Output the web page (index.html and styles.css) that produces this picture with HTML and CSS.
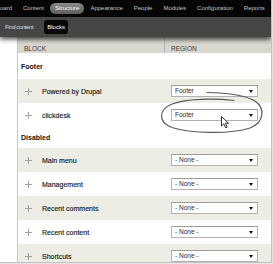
FILE: index.html
```html
<!DOCTYPE html>
<html lang="en">
<head>
    <meta charset="UTF-8">
    <meta name="viewport" content="width=device-width, initial-scale=1.0">
    <title>Blocks</title>
    <link rel="stylesheet" href="styles.css">
</head>
<body>
<div class="screen">
    <header class="toolbar">
        <nav class="toolbar-menu">
            <a class="first">oard</a>
            <a>Content</a>
            <a class="active">Structure</a>
            <a>Appearance</a>
            <a>People</a>
            <a>Modules</a>
            <a>Configuration</a>
            <a>Reports</a>
        </nav>
        <nav class="toolbar-shortcuts">
            <a class="find">Find content</a>
            <a class="active">Blocks</a>
        </nav>
    </header>

    <div class="content">
        <div class="block-table">
            <div class="row header">
                <div class="cell">Block</div>
                <div class="cell">Region</div>
            </div>

            <div class="row region footer-region"><div class="cell">Footer</div></div>
            <div class="row odd">
                <div class="cell"><span class="handle"></span>Powered by Drupal</div>
                <div class="cell"><span class="select">Footer</span></div>
            </div>
            <div class="row">
                <div class="cell"><span class="handle"></span>clickdesk</div>
                <div class="cell"><span class="select">Footer</span></div>
            </div>

            <div class="row region disabled-region"><div class="cell">Disabled</div></div>
            <div class="row odd">
                <div class="cell"><span class="handle"></span>Main menu</div>
                <div class="cell"><span class="select">- None -</span></div>
            </div>
            <div class="row">
                <div class="cell"><span class="handle"></span>Management</div>
                <div class="cell"><span class="select">- None -</span></div>
            </div>
            <div class="row odd">
                <div class="cell"><span class="handle"></span>Recent comments</div>
                <div class="cell"><span class="select">- None -</span></div>
            </div>
            <div class="row">
                <div class="cell"><span class="handle"></span>Recent content</div>
                <div class="cell"><span class="select">- None -</span></div>
            </div>
            <div class="row odd">
                <div class="cell"><span class="handle"></span>Shortcuts</div>
                <div class="cell"><span class="select">- None -</span></div>
            </div>
        </div>
    </div>

    <!-- hand drawn circle round the clickdesk region -->
    <svg class="annotation" width="273" height="264" viewBox="0 0 273 264">
        <path d="M207 92.5 C228 93 246 95.5 255 101 C265 108 265 122 250 128 C230 134.5 190 133.5 172 127.5 C158 122 158 110 172 104 C186 99 212 98 234 100.5"
              fill="none" stroke="#5a5a5a" stroke-width="1.2" stroke-linecap="round"/>
    </svg>
    <svg class="cursor" width="9" height="13" viewBox="0 0 9 13">
        <path d="M0.5 0.5 L0.5 10 L2.8 7.8 L4.6 11.8 L6.2 11.1 L4.4 7.2 L7.6 7.2 Z"
              fill="#fff" stroke="#000" stroke-width="0.8" stroke-linejoin="round"/>
    </svg>
</div>
</body>
</html>
```

FILE: styles.css
```css
body {
    margin: 0;
    width: 273px;
    height: 264px;
    overflow: hidden;
    background: #e6e6e6;
    font-family: 'Liberation Sans', Arial, sans-serif;
}

.screen {
    position: relative;
    width: 271px;
    height: 262px;
    overflow: hidden;
    background: #fff;
    border-right: 1px solid #c2c2c2;
    border-bottom: 1px solid #c2c2c2;
}

/* toolbar */

.toolbar {
    position: relative;
    z-index: 1;
    box-shadow: 0 2px 5px rgba(0, 0, 0, 0.75);
}

.toolbar a {
    font-size: 6px;
    line-height: 7px;
    white-space: nowrap;
}

.toolbar-menu {
    display: flex;
    align-items: center;
    gap: 1px;
    height: 17px;
    background: #050505;
}

.toolbar-menu a {
    padding: 2px 5px;
    color: #c4c4c4;
}

.toolbar-menu a.first {
    margin-left: -5px;
}

.toolbar-menu a.active {
    background: linear-gradient(#8a8a8a, #5e5e5e);
    border-radius: 6px;
    color: #fff;
}

.toolbar-shortcuts {
    display: flex;
    align-items: center;
    height: 20px;
    padding-left: 5px;
    background: #464646;
}

.toolbar-shortcuts a {
    color: #dedede;
}

.toolbar-shortcuts a.find {
    letter-spacing: -0.4px;
    margin-right: 11px;
}

.toolbar-shortcuts a.active {
    padding: 3.5px 3px;
    background: #080808;
    border-radius: 3px;
    color: #fff;
}

/* blocks table */

.content {
    padding-left: 17px;
}

.block-table {
    border-left: 1px solid #c8c8c8;
}

.row {
    display: grid;
    grid-template-columns: 147px 1fr;
    align-items: center;
    height: 24px;
    font-size: 7px;
    color: #1a1a1a;
    -webkit-text-stroke: 0.15px #1a1a1a;
}

.row.odd {
    background: #ededE5;
}

.row.header {
    height: 16px;
    align-items: stretch;
    background: linear-gradient(#c9c9c1, #d8d8d0 40%);
    font-size: 6.5px;
    text-transform: uppercase;
    color: #3a3a3a;
    -webkit-text-stroke: 0;
}

.row.header .cell {
    padding: 6px 0 0 6px;
}

.row.header .cell:first-child {
    border-right: 1px solid #b4b4ac;
}

.row.region {
    font-weight: bold;
    color: #111;
    -webkit-text-stroke: 0;
}

.row.region .cell {
    padding-left: 3px;
}

.footer-region {
    height: 26px;
}

.disabled-region {
    height: 21px;
}

.cell {
    display: flex;
    align-items: center;
    white-space: nowrap;
}

.cell + .cell {
    padding-left: 6px;
}

.handle {
    position: relative;
    width: 7px;
    height: 7px;
    margin: 0 10px 0 7px;
}

.handle::before,
.handle::after {
    content: '';
    position: absolute;
    background: #a0a0a0;
}

.handle::before {
    left: 3px;
    top: 0;
    width: 1px;
    height: 7px;
}

.handle::after {
    left: 0;
    top: 3px;
    width: 7px;
    height: 1px;
}

.select {
    position: relative;
    box-sizing: border-box;
    width: 87px;
    height: 12px;
    padding-left: 3px;
    border: 1px solid #b2b2b2;
    border-top-color: #9c9c9c;
    background: #fff;
    font-size: 6.5px;
    line-height: 10px;
    color: #2a2a2a;
    -webkit-text-stroke: 0;
}

.select::after {
    content: '';
    position: absolute;
    right: 4px;
    top: 4px;
    border-left: 2px solid transparent;
    border-right: 2px solid transparent;
    border-top: 3px solid #111;
}

/* annotation on top of the screenshot */

.annotation {
    position: absolute;
    left: 0;
    top: 0;
    z-index: 2;
    pointer-events: none;
}

.cursor {
    position: absolute;
    left: 221px;
    top: 116px;
    z-index: 3;
}
```
